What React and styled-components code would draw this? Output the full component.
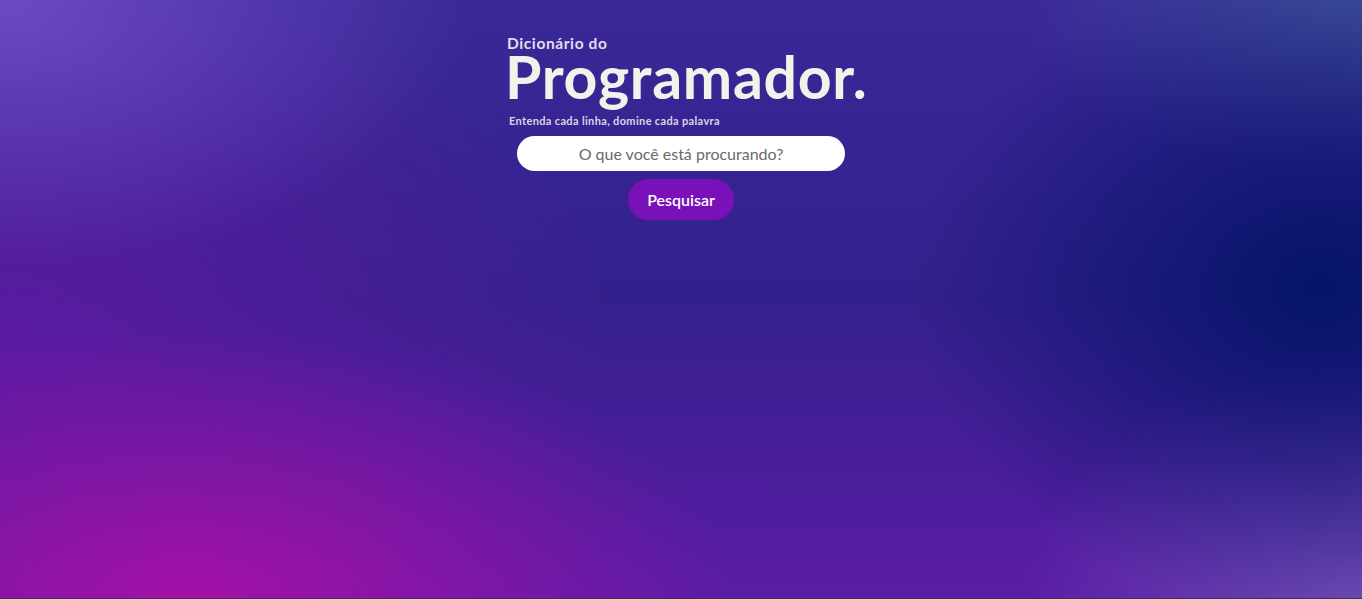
import React from "react";
import styled, { createGlobalStyle } from "styled-components";

const Global = createGlobalStyle`
  html, body { margin: 0; padding: 0; background: #363b47; }
  * { box-sizing: border-box; }
`;

const Page = styled.main`
  height: calc(100vh - 1px);
  display: flex;
  flex-direction: column;
  align-items: center;
  padding-top: 36px;
  font-family: Lato, "Noto Sans", sans-serif;
  background:
    radial-gradient(ellipse 40% 45% at 14% 100%, rgba(168, 16, 168, 0.95), rgba(168, 16, 168, 0) 100%),
    radial-gradient(ellipse 30% 55% at 97% 48%, rgba(4, 20, 104, 1), rgba(4, 20, 104, 0) 100%),
    radial-gradient(ellipse 35% 45% at 0% 0%, rgba(108, 74, 196, 1), rgba(108, 74, 196, 0) 100%),
    radial-gradient(ellipse 25% 30% at 100% 0%, rgba(64, 80, 156, 1), rgba(64, 80, 156, 0) 100%),
    radial-gradient(ellipse 25% 40% at 100% 100%, rgba(110, 76, 180, 1), rgba(110, 76, 180, 0) 100%),
    radial-gradient(ellipse 45% 70% at 0% 60%, rgba(96, 26, 164, 0.9), rgba(96, 26, 164, 0) 100%),
    linear-gradient(180deg, #3a2898 0%, #34208c 50%, #5a1ca6 100%);
`;

const Header = styled.header`
  display: flex;
  flex-direction: column;
  align-items: flex-start;
  width: 362px;
  margin-left: 10px;
`;

const Kicker = styled.span`
  font-size: 15.5px;
  font-weight: 700;
  letter-spacing: 0.6px;
  color: #e4dcea;
  line-height: 15px;
  margin-left: 2px;
`;

const Title = styled.h1`
  margin: 0;
  font-size: 59px;
  font-weight: 700;
  letter-spacing: 0.7px;
  color: #f3f1ea;
  line-height: 52px;
`;

const Tagline = styled.p`
  margin: 11px 0 0 4px;
  font-size: 11px;
  font-weight: 700;
  letter-spacing: 0.35px;
  color: #dcd4e6;
  line-height: 13px;
`;

const Search = styled.input`
  margin-top: 9px;
  width: 328px;
  height: 35px;
  border: none;
  border-radius: 18px;
  background: #ffffff;
  text-align: center;
  font-family: Lato, "Noto Sans", sans-serif;
  font-size: 16px;
  color: #333;
  outline: none;
  &::placeholder { color: #6a6a6a; }
`;

const Button = styled.button`
  margin-top: 8px;
  width: 106px;
  height: 41px;
  border: none;
  border-radius: 21px;
  background: #7a10b8;
  color: #ffffff;
  font-family: Lato, "Noto Sans", sans-serif;
  font-size: 16px;
  font-weight: 600;
  cursor: pointer;
`;

export default function App() {
  return (
    <>
      <Global />
      <Page>
        <Header>
          <Kicker>Dicionário do</Kicker>
          <Title>Programador.</Title>
          <Tagline>Entenda cada linha, domine cada palavra</Tagline>
        </Header>
        <Search placeholder="O que você está procurando?" />
        <Button>Pesquisar</Button>
      </Page>
    </>
  );
}
